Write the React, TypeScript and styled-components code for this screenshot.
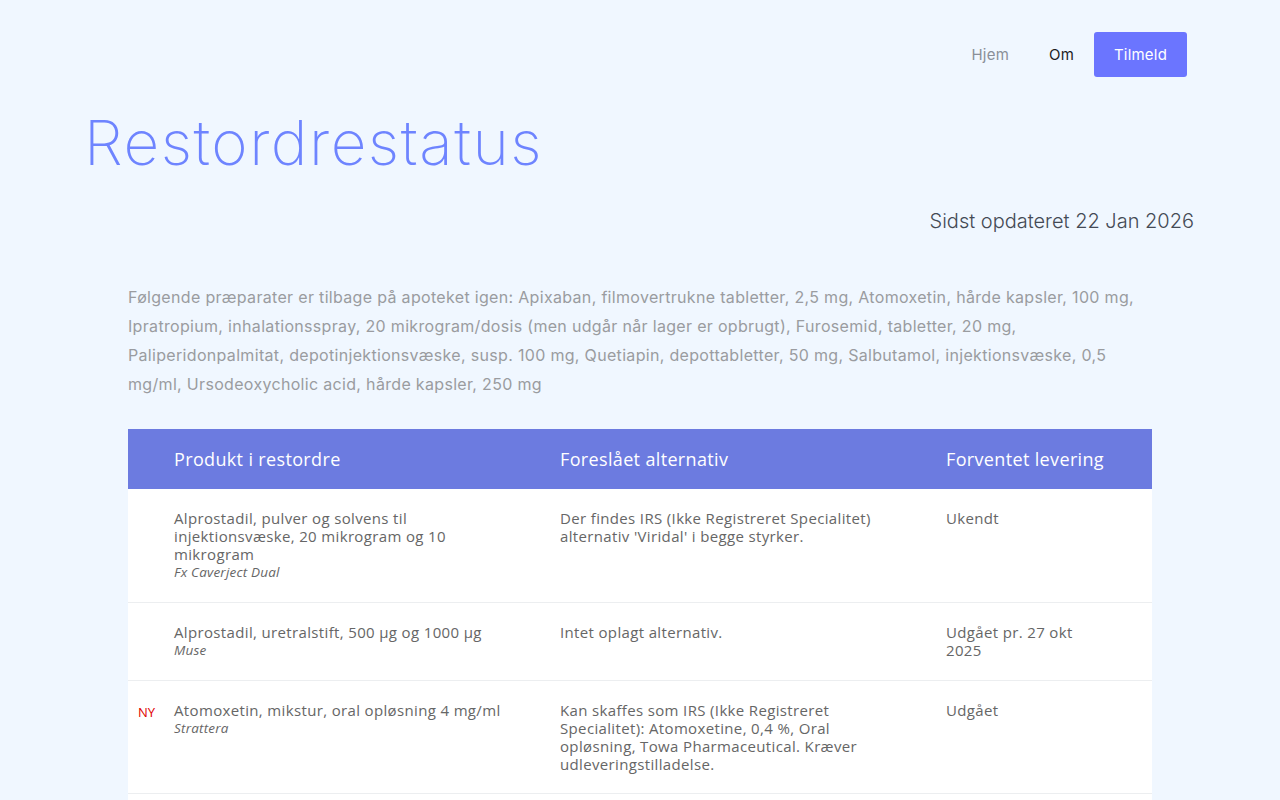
import React from "react";
import styled, { createGlobalStyle } from "styled-components";

const Global = createGlobalStyle`
  html, body { margin: 0; padding: 0; background: #f0f7ff; }
  body { font-family: "Inter", "Liberation Sans", sans-serif; }
  * { box-sizing: border-box; }
`;

const Page = styled.div`
  width: 1280px;
  min-height: 800px;
  background: #f0f7ff;
`;

const Nav = styled.nav`
  display: flex;
  justify-content: flex-end;
  align-items: center;
  padding: 32px 93px 0 0;
`;

const NavLink = styled.a<{ $active?: boolean }>`
  font-family: "Inter", sans-serif;
  font-size: 15px;
  letter-spacing: 0.2px;
  color: ${(p) => (p.$active ? "#1d1d1f" : "#8a8f98")};
  padding: 0 20px;
  line-height: 45px;
  text-decoration: none;
`;

const NavButton = styled.a`
  display: inline-flex;
  align-items: center;
  justify-content: center;
  width: 93px;
  height: 45px;
  background: #6b75ff;
  color: #fff;
  border-radius: 3px;
  font-family: "Inter", sans-serif;
  font-size: 15px;
  letter-spacing: 0.2px;
  text-decoration: none;
`;

const Title = styled.h1`
  margin: 26px 0 0 84px;
  font-family: "Inter", sans-serif;
  font-weight: 200;
  font-size: 62px;
  letter-spacing: 1.5px;
  line-height: 80px;
  color: #6e84ff;
`;

const Updated = styled.div`
  text-align: right;
  padding-right: 86px;
  margin-top: 26px;
  font-family: "Inter", sans-serif;
  font-weight: 300;
  font-size: 20px;
  letter-spacing: 0;
  color: #444a55;
`;

const Content = styled.div`
  width: 1024px;
  margin: 50px 0 0 128px;
`;

const Intro = styled.p`
  margin: 0;
  font-family: "Inter", sans-serif;
  font-size: 16px;
  letter-spacing: 0.32px;
  line-height: 29px;
  color: #9a9ca0;
`;

const Table = styled.table`
  width: 1024px;
  margin-top: 30px;
  border-collapse: collapse;
  table-layout: fixed;
  font-family: "Open Sans", sans-serif;
`;

const HeadRow = styled.tr`
  background: #6c7be0;
  height: 60px;
`;

const Th = styled.th<{ $w: number }>`
  width: ${(p) => p.$w}px;
  text-align: left;
  font-weight: 400;
  font-size: 18px;
  letter-spacing: 0.35px;
  color: #fff;
  padding: 0 10px;
`;

const Row = styled.tr`
  background: #fff;
  border-bottom: 1px solid #eceef0;
`;

const Td = styled.td<{ $pr: number }>`
  vertical-align: top;
  padding: 20px ${(p) => p.$pr}px 20px 10px;
  font-size: 15px;
  letter-spacing: 0.35px;
  line-height: 18px;
  color: #666;
`;

const NewTd = styled.td`
  vertical-align: top;
  padding: 22px 0 0 10px;
  font-size: 13px;
  line-height: 18px;
  color: #e00000;
`;

const Brand = styled.div`
  font-style: italic;
  font-size: 13.5px;
  line-height: 19px;
  letter-spacing: 0.2px;
  color: #666;
`;

type Item = { isNew?: boolean; product: string; brand: string; alt: string; delivery: string };

const items: Item[] = [
  {
    product: "Alprostadil, pulver og solvens til injektionsvæske, 20 mikrogram og 10 mikrogram",
    brand: "Fx Caverject Dual",
    alt: "Der findes IRS (Ikke Registreret Specialitet) alternativ 'Viridal' i begge styrker.",
    delivery: "Ukendt",
  },
  {
    product: "Alprostadil, uretralstift, 500 µg og 1000 µg",
    brand: "Muse",
    alt: "Intet oplagt alternativ.",
    delivery: "Udgået pr. 27 okt 2025",
  },
  {
    isNew: true,
    product: "Atomoxetin, mikstur, oral opløsning 4 mg/ml",
    brand: "Strattera",
    alt: "Kan skaffes som IRS (Ikke Registreret Specialitet): Atomoxetine, 0,4 %, Oral opløsning, Towa Pharmaceutical. Kræver udleveringstilladelse.",
    delivery: "Udgået",
  },
  {
    product: "Atomoxetin, hårde kapsler, 10 mg",
    brand: "Strattera",
    alt: "Intet oplagt alternativ.",
    delivery: "Ukendt",
  },
];

export default function App() {
  return (
    <Page>
      <Global />
      <Nav>
        <NavLink href="#">Hjem</NavLink>
        <NavLink href="#" $active>Om</NavLink>
        <NavButton href="#">Tilmeld</NavButton>
      </Nav>
      <Title>Restordrestatus</Title>
      <Updated>Sidst opdateret 22 Jan 2026</Updated>
      <Content>
        <Intro>
          Følgende præparater er tilbage på apoteket igen: Apixaban, filmovertrukne tabletter, 2,5 mg, Atomoxetin, hårde kapsler, 100 mg, Ipratropium, inhalationsspray, 20 mikrogram/dosis (men udgår når lager er opbrugt), Furosemid, tabletter, 20 mg, Paliperidonpalmitat, depotinjektionsvæske, susp. 100 mg, Quetiapin, depottabletter, 50 mg, Salbutamol, injektionsvæske, 0,5 mg/ml, Ursodeoxycholic acid, hårde kapsler, 250 mg
        </Intro>
        <Table>
          <thead>
            <HeadRow>
              <Th $w={36}></Th>
              <Th $w={386}>Produkt i restordre</Th>
              <Th $w={386}>Foreslået alternativ</Th>
              <Th $w={216}>Forventet levering</Th>
            </HeadRow>
          </thead>
          <tbody>
            {items.map((it, i) => (
              <Row key={i}>
                <NewTd>{it.isNew ? "NY" : ""}</NewTd>
                <Td $pr={44}>
                  {it.product}
                  <Brand>{it.brand}</Brand>
                </Td>
                <Td $pr={62}>{it.alt}</Td>
                <Td $pr={50}>{it.delivery}</Td>
              </Row>
            ))}
          </tbody>
        </Table>
      </Content>
    </Page>
  );
}
